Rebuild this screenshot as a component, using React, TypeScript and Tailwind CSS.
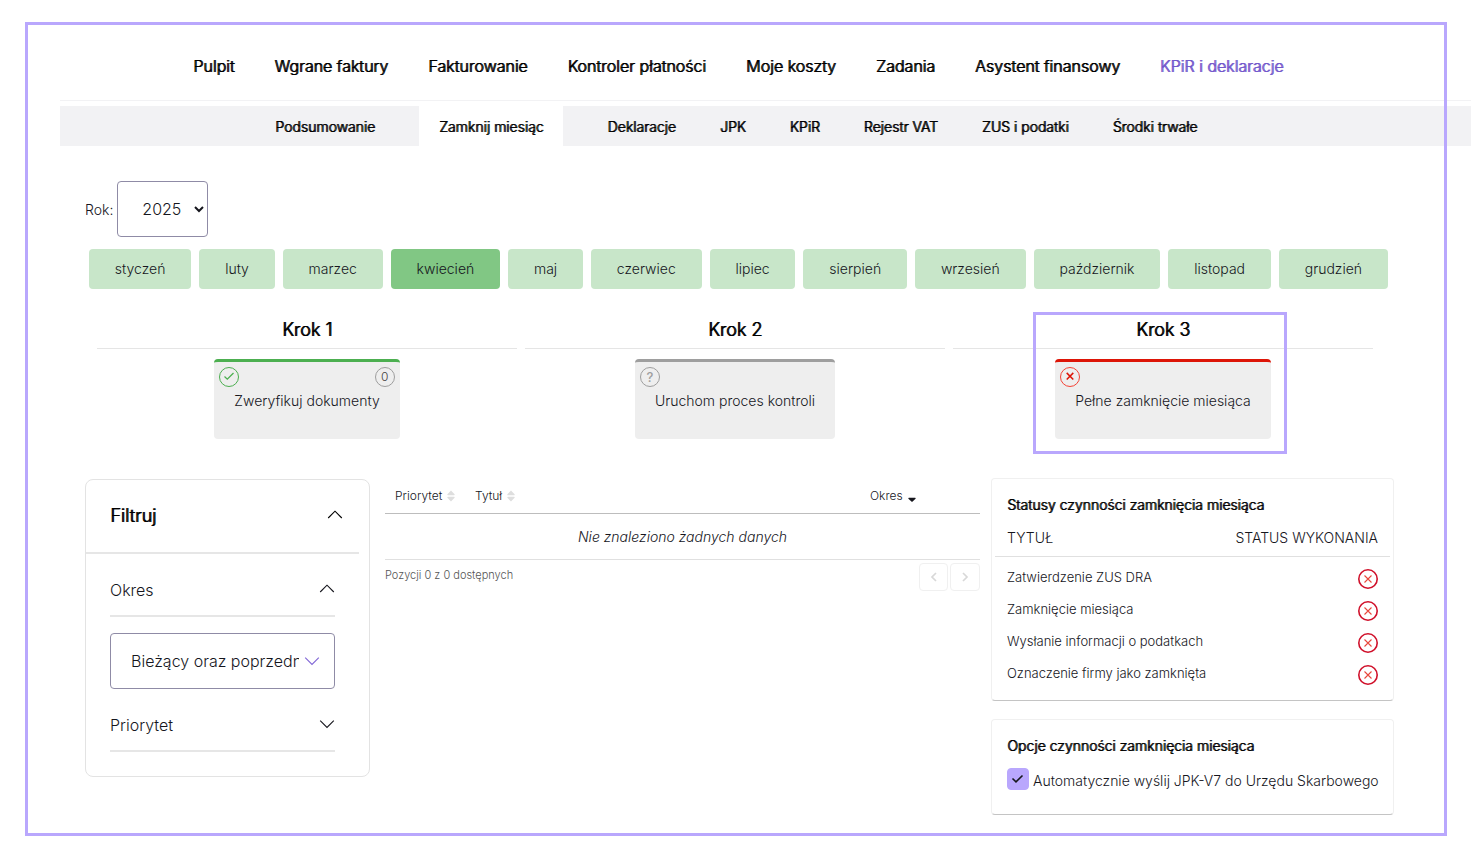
import { useState } from 'react';
import type { ReactNode } from 'react';
import clsx from 'clsx';

// ─── Data ─────────────────────────────────────────────────────────────────────

const MAIN_NAV = [
  'Pulpit',
  'Wgrane faktury',
  'Fakturowanie',
  'Kontroler płatności',
  'Moje koszty',
  'Zadania',
  'Asystent finansowy',
  'KPiR i deklaracje',
];

const SUB_NAV = [
  'Podsumowanie',
  'Zamknij miesiąc',
  'Deklaracje',
  'JPK',
  'KPiR',
  'Rejestr VAT',
  'ZUS i podatki',
  'Środki trwałe',
];

const MONTHS = [
  'styczeń',
  'luty',
  'marzec',
  'kwiecień',
  'maj',
  'czerwiec',
  'lipiec',
  'sierpień',
  'wrzesień',
  'październik',
  'listopad',
  'grudzień',
];

const STATUSES = [
  'Zatwierdzenie ZUS DRA',
  'Zamknięcie miesiąca',
  'Wysłanie informacji o podatkach',
  'Oznaczenie firmy jako zamknięta',
];

type StepStatus = 'done' | 'unknown' | 'failed';

interface Step {
  title: string;
  label: string;
  status: StepStatus;
  count?: number;
  highlighted?: boolean;
}

const STEPS: Step[] = [
  { title: 'Krok 1', label: 'Zweryfikuj dokumenty', status: 'done', count: 0 },
  { title: 'Krok 2', label: 'Uruchom proces kontroli', status: 'unknown' },
  { title: 'Krok 3', label: 'Pełne zamknięcie miesiąca', status: 'failed', highlighted: true },
];

const stepConfig: Record<StepStatus, { card: string; badge: string }> = {
  done: { card: 'border-[#4caf50]', badge: 'border-[#4caf50] text-[#4caf50]' },
  unknown: { card: 'border-[#9e9e9e]', badge: 'border-[#9e9e9e] text-[#9e9e9e]' },
  failed: { card: 'border-[#dd1507]', badge: 'border-[#f44336] text-[#dd1507]' },
};

// light face thickened by a one pixel shadow
const EMPHASIS = '[text-shadow:1px_0_0_currentColor]';

// ─── Icons ────────────────────────────────────────────────────────────────────

function Chevron({ up = false, className }: { up?: boolean; className?: string }) {
  return (
    <svg viewBox="0 0 16 16" className={clsx('h-4 w-4 shrink-0', className)} fill="none" stroke="currentColor" strokeWidth="1.1" aria-hidden="true">
      <path d={up ? 'M1.2 11 8 4.2l6.8 6.8' : 'M1.2 4.6l6.8 6.8 6.8-6.8'} />
    </svg>
  );
}

function SortArrows() {
  return (
    <svg viewBox="0 0 8 12" className="h-3 w-2 fill-[#dedede]" aria-hidden="true">
      <path d="M4 0.5 7.6 4.2Q8 5.3 7 5.3H1Q0 5.3 0.4 4.2ZM4 11.5 7.6 7.8Q8 6.7 7 6.7H1Q0 6.7 0.4 7.8Z" />
    </svg>
  );
}

function StepIcon({ status }: { status: StepStatus }) {
  if (status === 'unknown') return <span className="text-[13px] leading-none font-medium">?</span>;
  return (
    <svg viewBox="0 0 12 12" className="mb-0.5 h-3 w-3" fill="none" stroke="currentColor" strokeWidth={status === 'done' ? 1.3 : 1.5} aria-hidden="true">
      <path d={status === 'done' ? 'M1.5 6.5 4.3 9.2 10.5 3' : 'M2.7 2.9 9.3 9.5M9.3 2.9 2.7 9.5'} />
    </svg>
  );
}

function FailedIcon() {
  return (
    <svg viewBox="0 0 20 20" className="ml-auto h-5 w-5" fill="none" role="img" aria-label="Niewykonane">
      <circle cx="10" cy="10" r="9.2" stroke="#d0102a" strokeWidth="1.6" />
      <path d="M6.5 6.5l7 7M13.5 6.5l-7 7" stroke="#e8473c" strokeWidth="1.1" />
    </svg>
  );
}

// ─── Sections ─────────────────────────────────────────────────────────────────

function StepColumn({ step }: { step: Step }) {
  const config = stepConfig[step.status];

  return (
    <section className="relative flex flex-col items-center">
      <h2 className={clsx('flex h-[37px] w-full items-center justify-center border-b border-[#e5e5e5] text-lg text-black', EMPHASIS)}>
        {step.title}
      </h2>
      <button className={clsx('relative mt-2.5 h-20 rounded border-t-[3px] bg-[#eeeeee] px-5 text-sm', config.card)}>
        <span className={clsx('absolute top-[5px] left-[5px] flex h-5 w-5 items-center justify-center rounded-full border', config.badge)}>
          <StepIcon status={step.status} />
        </span>
        {step.count !== undefined && (
          <span className="absolute top-[5px] right-[5px] flex h-5 w-5 items-center justify-center rounded-full border border-[#9e9e9e] text-xs text-[#444]">
            {step.count}
          </span>
        )}
        <span className="whitespace-nowrap">{step.label}</span>
      </button>
      {step.highlighted && (
        <div className="pointer-events-none absolute top-0 right-[86px] -bottom-[15px] left-[80px] border-[3px] border-[#b9a7fd]" />
      )}
    </section>
  );
}

function FilterHeading({ children, open }: { children: ReactNode; open: boolean }) {
  return (
    <button aria-expanded={open} className="flex h-[51px] w-full items-center justify-between border-b-2 border-[#e6e6e6] pb-0.5 text-base">
      {children}
      <Chevron up={open} className="mb-0.5" />
    </button>
  );
}

function FilterPanel() {
  return (
    <aside className="mt-px w-[285px] shrink-0 rounded-lg border border-[#e3e3e3] pb-6">
      <button aria-expanded="true" className="flex h-[74px] w-[273px] items-center justify-between border-b-2 border-[#e6e6e6] pr-4 pl-6 text-lg text-black">
        <span className={EMPHASIS}>Filtruj</span>
        <Chevron up className="mb-0.5" />
      </button>
      <div className="pt-3 pr-[34px] pl-6">
        <FilterHeading open>Okres</FilterHeading>
        <div className="relative mt-4 mb-3">
          <select aria-label="Okres" className="h-14 w-full appearance-none overflow-hidden rounded border border-[#8f8ba6] bg-white pr-[35px] pl-5 text-base">
            <option>Bieżący oraz poprzednie</option>
          </select>
          <Chevron className="pointer-events-none absolute top-5 right-[15px] text-[#8066d6]" />
        </div>
        <FilterHeading open={false}>Priorytet</FilterHeading>
      </div>
    </aside>
  );
}

function ResultsTable() {
  return (
    <div className="mt-px min-w-0 grow">
      <table className="w-full table-fixed text-left">
        <thead>
          <tr className="h-[34px] border-b border-[#bdbdbd] text-xs">
            <th className="w-[82px] pl-2.5 font-light">
              <button className="flex items-center gap-[5px]">Priorytet <SortArrows /></button>
            </th>
            <th className="pl-2 font-light">
              <button className="flex items-center gap-[5px]">Tytuł <SortArrows /></button>
            </th>
            <th className="w-[120px] pl-2.5 font-light">
              <button className="flex items-center gap-[5px]">
                Okres
                <svg viewBox="0 0 8 12" className="h-3 w-2 fill-[#16161d]" aria-hidden="true">
                  <path d="M0.4 8.8Q0 7.7 1 7.7H7Q8 7.7 7.6 8.8L4 12Z" />
                </svg>
              </button>
            </th>
          </tr>
        </thead>
        <tbody>
          <tr className="h-[46px] border-b border-[#e0e0e0]">
            <td colSpan={3} className="pt-0.5 text-center text-sm italic">Nie znaleziono żadnych danych</td>
          </tr>
        </tbody>
      </table>
      <div className="flex justify-between pt-[3px]">
        <p className="pt-1 text-[11px] leading-4 text-[#555]">Pozycji 0 z 0 dostępnych</p>
        <div className="flex gap-0.5">
          <button aria-label="Poprzednia strona" disabled className="flex h-7 w-[29px] items-center justify-center rounded-sm border border-[#f0f0f0] text-[#d8d8d8]">
            <svg viewBox="0 0 8 10" className="h-2.5 w-2" fill="none" stroke="currentColor" strokeWidth="1.7"><path d="M6 1 2 5l4 4" /></svg>
          </button>
          <button aria-label="Następna strona" disabled className="flex h-7 w-[30px] items-center justify-center rounded-sm border border-[#f0f0f0] text-[#d8d8d8]">
            <svg viewBox="0 0 8 10" className="h-2.5 w-2" fill="none" stroke="currentColor" strokeWidth="1.7"><path d="M2 1l4 4-4 4" /></svg>
          </button>
        </div>
      </div>
    </div>
  );
}

function Card({ title, children }: { title: string; children: ReactNode }) {
  return (
    <section className="rounded border border-[#f0f0f0] border-b-[#c4c4c4] px-[3px] pt-3">
      <h3 className={clsx('px-3 text-sm leading-7 text-black', EMPHASIS)}>{title}</h3>
      {children}
    </section>
  );
}

// ─── Page ─────────────────────────────────────────────────────────────────────

export default function App() {
  const [year, setYear] = useState('2025');
  const [month, setMonth] = useState('kwiecień');
  const [autoSend, setAutoSend] = useState(true);

  return (
    <div className="relative min-h-screen bg-white pr-[7px] pb-[43px] pl-[60px] font-['Inter',sans-serif] font-light text-[#16161d]">
      {/* Main navigation */}
      <nav className="border-b border-[#f2f2f4] pt-8 pl-[133px]">
        <ul className="flex h-[68px] items-center gap-10 text-base whitespace-nowrap text-black">
          {MAIN_NAV.map((item) => (
            <li key={item}>
              <a href="#" className={clsx(EMPHASIS, item === 'KPiR i deklaracje' && 'text-[#7459cc]')}>{item}</a>
            </li>
          ))}
        </ul>
      </nav>

      {/* Section tabs */}
      <nav className="mt-[5px] bg-[#f2f2f4] pl-[215px]">
        <ul className="flex gap-11 text-sm whitespace-nowrap text-black">
          {SUB_NAV.map((item) => (
            <li key={item}>
              <a href="#" className={clsx('flex h-10 items-center pt-0.5', EMPHASIS, item === 'Zamknij miesiąc' && 'bg-white px-5')}>{item}</a>
            </li>
          ))}
        </ul>
      </nav>

      <main className="pt-[35px] pr-[77px] pl-[25px]">
        <div className="flex items-center gap-1 text-sm">
          <label htmlFor="year" className="pt-0.5">Rok:</label>
          <select
            id="year"
            value={year}
            onChange={(e) => setYear(e.target.value)}
            className="h-14 w-[91px] rounded border border-[#8f8ba6] bg-white pl-5 text-base"
          >
            <option>2025</option>
            <option>2024</option>
          </select>
        </div>

        {/* Months */}
        <div className="mt-3 flex gap-2 pr-1.5 pl-1">
          {MONTHS.map((name) => (
            <button
              key={name}
              onClick={() => setMonth(name)}
              className={clsx('h-10 grow rounded px-4 text-sm', name === month ? 'bg-[#81c784]' : 'bg-[#c8e6c9]')}
            >
              {name}
            </button>
          ))}
        </div>

        {/* Closing steps */}
        <div className="mt-[23px] grid grid-cols-3 gap-2 pr-[21px] pl-3">
          {STEPS.map((step) => (
            <StepColumn key={step.title} step={step} />
          ))}
        </div>

        <div className="mt-[39px] flex items-start">
          <FilterPanel />
          <div className="flex min-w-0 grow pr-[11px] pl-[15px]">
            <ResultsTable />
          </div>
          <div className="flex w-[403px] shrink-0 flex-col gap-[18px]">
            <Card title="Statusy czynności zamknięcia miesiąca">
              <table className="mb-[9px] w-full">
                <thead>
                  <tr className="h-[37px] border-b border-[#e0e0e0] text-sm uppercase">
                    <th className="px-3 pt-0.5 text-left font-light">Tytuł</th>
                    <th className="px-3 pt-0.5 text-right font-light">Status wykonania</th>
                  </tr>
                </thead>
                <tbody className="before:block before:h-1.5">
                  {STATUSES.map((status) => (
                    <tr key={status} className="h-8 text-[13px]">
                      <td className="px-3 pb-0.5">{status}</td>
                      <td className="px-3"><FailedIcon /></td>
                    </tr>
                  ))}
                </tbody>
              </table>
            </Card>
            <Card title="Opcje czynności zamknięcia miesiąca">
              <label className="mt-2 mb-6 flex h-[22px] items-center gap-1 px-3 text-sm whitespace-nowrap">
                <span className="relative h-[22px] w-[22px] shrink-0">
                  <input
                    type="checkbox"
                    checked={autoSend}
                    onChange={(e) => setAutoSend(e.target.checked)}
                    className="block h-full w-full appearance-none rounded border border-[#b9a7fd] checked:bg-[#b9a7fd]"
                  />
                  {autoSend && (
                    <svg viewBox="0 0 22 22" className="pointer-events-none absolute inset-0" fill="none" stroke="#16161d" strokeWidth="1.6">
                      <path d="M5.5 10.5 9 13.8 15.5 7.5" />
                    </svg>
                  )}
                </span>
                <span className="pt-1">Automatycznie wyślij JPK-V7 do Urzędu Skarbowego</span>
              </label>
            </Card>
          </div>
        </div>
      </main>

      {/* Highlight frame around the whole view */}
      <div className="pointer-events-none absolute top-[22px] right-[31px] bottom-[22px] left-[25px] border-[3px] border-[#b9a7fd]" />
    </div>
  );
}
